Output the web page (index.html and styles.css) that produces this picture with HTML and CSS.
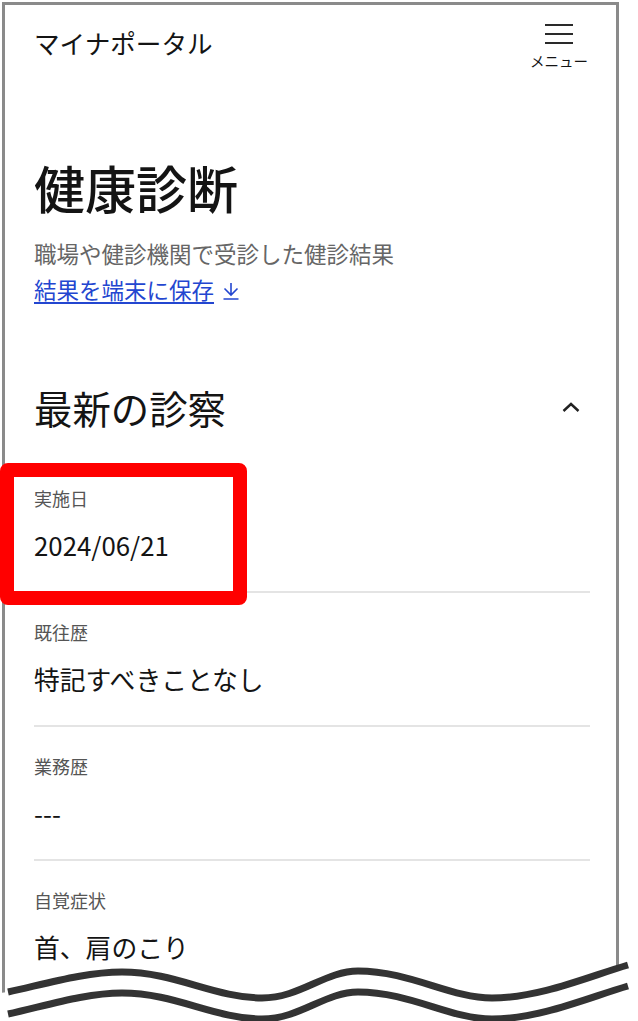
FILE: index.html
```html
<!DOCTYPE html>
<html lang="ja">
<head>
  <meta charset="UTF-8">
  <meta name="viewport" content="width=device-width, initial-scale=1.0">
  <title>健康診断 | マイナポータル</title>
  <link rel="stylesheet" href="styles.css">
</head>
<body>
  <div class="phone">
    <!-- Top bar -->
    <header class="topbar">
      <span class="brand">マイナポータル</span>
      <button class="menu" type="button">
        <span class="menu-icon"><i></i><i></i><i></i></span>
        <span class="menu-label">メニュー</span>
      </button>
    </header>

    <main>
      <h1 class="page-title">健康診断</h1>
      <p class="lead">職場や健診機関で受診した健診結果</p>
      <p class="save">
        <a href="#">結果を端末に保存</a>
        <svg class="save-icon" viewBox="0 0 18 18" aria-hidden="true">
          <path d="M9 1V13M2.5 6.5L9 13L15.5 6.5M1.5 17H16.5" fill="none" stroke="currentColor" stroke-width="1.6"/>
        </svg>
      </p>

      <!-- Latest exam -->
      <section class="latest">
        <div class="latest-head">
          <h2>最新の診察</h2>
          <svg class="chevron" viewBox="0 0 18 10" aria-hidden="true">
            <path d="M1.5 9L9 2L16.5 9" fill="none" stroke="#222" stroke-width="2.4"/>
          </svg>
        </div>

        <dl class="records">
          <div class="record">
            <dt>実施日</dt>
            <dd>2024/06/21</dd>
            <span class="marker"></span>
          </div>
          <div class="record">
            <dt>既往歴</dt>
            <dd>特記すべきことなし</dd>
          </div>
          <div class="record">
            <dt>業務歴</dt>
            <dd>---</dd>
          </div>
          <div class="record">
            <dt>自覚症状</dt>
            <dd>首、肩のこり</dd>
          </div>
        </dl>
      </section>
    </main>
  </div>

  <!-- torn edge -->
  <svg class="tear" viewBox="0 950 638 71" aria-hidden="true">
    <path d="M0 993 L8 992 C45 984 85 972 122 972 C175 972 215 998 262 998 C300 998 325 971 358 971 C410 971 450 998 492 998 C540 998 590 976 630 964 L638 964 L638 1021 L0 1021 Z" fill="#fff"/>
    <path d="M8 992 C45 984 85 972 122 972 C175 972 215 998 262 998 C300 998 325 971 358 971 C410 971 450 998 492 998 C540 998 590 976 628 965" fill="none" stroke="#333" stroke-width="7"/>
    <path d="M8 1014 C45 1006 85 993 122 993 C175 993 215 1019 262 1019 C300 1019 325 992 358 992 C410 992 450 1019 492 1019 C540 1019 590 997 628 986" fill="none" stroke="#333" stroke-width="7"/>
  </svg>
</body>
</html>
```

FILE: styles.css
```css
* {
  margin: 0;
  padding: 0;
  box-sizing: border-box;
}

body {
  position: relative;
  height: 1021px;
  overflow: hidden;
  background-color: #fff;
  color: #141414;
  font-family: "Noto Sans CJK JP", "Noto Sans", sans-serif;
}

.phone {
  margin: 2px 0 0 2px;
  width: 617px;
  height: 1019px;
  border: 3px solid #8a8a8a;
  border-bottom: 0;
  padding: 0 26px 0 29px;
}

.topbar {
  display: flex;
  justify-content: space-between;
  align-items: flex-start;
  padding-top: 19px;
}

.brand {
  font-size: 25.6px;
  line-height: 38px;
}

.menu {
  display: flex;
  flex-direction: column;
  align-items: center;
  width: 58px;
  margin-right: 2px;
  background: none;
  border: 0;
  color: inherit;
  font-family: inherit;
}

.menu-icon {
  display: flex;
  flex-direction: column;
  gap: 7px;
  width: 28px;
}

.menu-icon i {
  display: block;
  height: 2px;
  background-color: #2a2a2a;
}

.menu-label {
  margin-top: 9px;
  font-size: 14.5px;
  line-height: 16px;
}

.page-title {
  margin-top: 85px;
  font-size: 51px;
  line-height: 66px;
  font-weight: 500;
}

.lead {
  margin-top: 17px;
  font-size: 22.5px;
  line-height: 32px;
  color: #666;
}

.save {
  display: flex;
  align-items: center;
  gap: 8px;
  margin-top: 4px;
  font-size: 22.5px;
  line-height: 32px;
  color: #2346d0;
}

.save a {
  color: inherit;
  text-underline-offset: 3px;
}

.save-icon {
  width: 18px;
  height: 18px;
  margin-top: 3px;
}

.latest-head {
  display: flex;
  justify-content: space-between;
  align-items: center;
  margin-top: 75px;
  height: 54px;
}

.latest-head h2 {
  font-size: 38.4px;
  line-height: 54px;
  font-weight: 400;
}

.chevron {
  width: 18px;
  height: 10px;
  margin-right: 10px;
}

.records {
  margin-top: 25px;
}

.record {
  position: relative;
  padding: 26px 0 28px;
  border-bottom: 2px solid #e4e4e4;
}

.record:last-child {
  border-bottom: 0;
}

.record dt {
  font-size: 18px;
  line-height: 26px;
  color: #555;
}

.record dd {
  margin-top: 16px;
  font-size: 25.8px;
  line-height: 36px;
}

/* red annotation frame */
.marker {
  position: absolute;
  left: -34px;
  top: 4px;
  width: 247px;
  height: 142px;
  border: 14px solid #ff0000;
  border-radius: 8px;
}

.tear {
  position: absolute;
  left: 0;
  top: 950px;
  width: 638px;
  height: 71px;
}
```
